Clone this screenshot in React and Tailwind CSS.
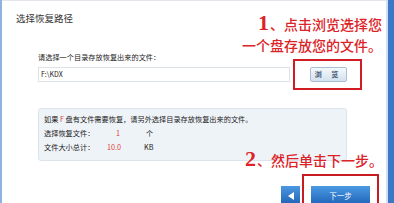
import React from "react";

const cjk = { fontFamily: '"Noto Sans CJK SC", "Noto Sans", sans-serif' };

export default function App() {
  return (
    <div
      className="relative flex h-[203px] w-[394px] overflow-hidden bg-white text-[#333]"
      style={cjk}
    >
      <div className="w-[2px] bg-[#8db2de]" />
      <div className="flex flex-1 flex-col border-t border-[#e3e7ec]">
        <div className="pl-[14px] pt-[10px] text-[9.5px] leading-[14px] text-[#333]">
          选择恢复路径
        </div>
        <div className="flex flex-col pl-[36px] pt-[27px]">
          <div className="text-[7.2px] leading-[10px] text-[#222]">
            请选择一个目录存放恢复出来的文件：
          </div>
          <div className="mt-[5px] flex items-center">
            <div className="flex h-[15px] w-[252px] items-center border border-[#dde2e7] bg-white pl-[2px] text-[7px] text-[#222]">
              F:\KDX
            </div>
            <div className="ml-[20px] flex h-[15px] w-[37px] items-center justify-center rounded-[2px] border border-[#aac0d6] bg-gradient-to-b from-[#f5f9fc] to-[#d3e1ee] text-[7px] font-bold tracking-[4px] text-[#3d5874]">
              浏 览
            </div>
          </div>
          <div className="mt-[26px] flex w-[309px] flex-col gap-[4px] rounded-[3px] border border-[#dbe4ed] bg-[#eef3f8] px-[5px] pb-[8px] pt-[5px] text-[7.2px] leading-[10px] text-[#222]">
            <div>
              如果 <span className="text-[#e04040]">F</span> 盘有文件需要恢复，请另外选择目录存放恢复出来的文件。
            </div>
            <div className="flex">
              <span className="w-[70px]">选择恢复文件：</span>
              <span className="w-[32px] pl-[2px] text-[#e04040]">1</span>
              <span>个</span>
            </div>
            <div className="flex">
              <span className="w-[63px]">文件大小总计：</span>
              <span className="w-[37px] text-[#e04040]">10.0</span>
              <span>KB</span>
            </div>
          </div>
          <div className="mt-[25px] flex w-[332px] justify-end gap-[11px]">
            <div className="flex h-[19px] w-[19px] items-center justify-center bg-gradient-to-b from-[#4b98e0] to-[#1f62b6]">
              <svg width="6" height="8" viewBox="0 0 6 8">
                <path d="M6 0 L0 4 L6 8 Z" fill="#fff" />
              </svg>
            </div>
            <div className="flex h-[19px] w-[59px] items-center justify-center bg-gradient-to-b from-[#4b9ae2] to-[#1f63b8] text-[7.5px] text-white">
              下一步
            </div>
          </div>
        </div>
      </div>
      <div className="w-[2px] bg-[#cfe0f2]" />
      <div className="w-[6px] bg-[#3c78c4]" />

      {/* annotations */}
      <div className="absolute right-[12px] top-[12px] flex flex-col items-end text-[14px] font-medium leading-[21px] text-[#dc2328]">
        <div className="flex items-baseline">
          <span
            className="mr-[1px] text-[22px] font-bold"
            style={{ fontFamily: '"Liberation Serif", serif' }}
          >
            1
          </span>
          <span>、点击浏览选择您</span>
        </div>
        <div>一个盘存放您的文件。</div>
      </div>
      <div className="absolute left-[293px] top-[59px] h-[31px] w-[69px] border-2 border-[#d01c22]" />

      <div className="absolute right-[11px] top-[148px] flex items-baseline text-[14px] font-medium leading-[21px] text-[#dc2328]">
        <span
          className="mr-[1px] text-[22px] font-bold"
          style={{ fontFamily: '"Liberation Serif", serif' }}
        >
          2
        </span>
        <span>、然后单击下一步。</span>
      </div>
      <div className="absolute left-[302px] top-[174px] h-[40px] w-[77px] border-2 border-[#c81c22]" />
    </div>
  );
}
